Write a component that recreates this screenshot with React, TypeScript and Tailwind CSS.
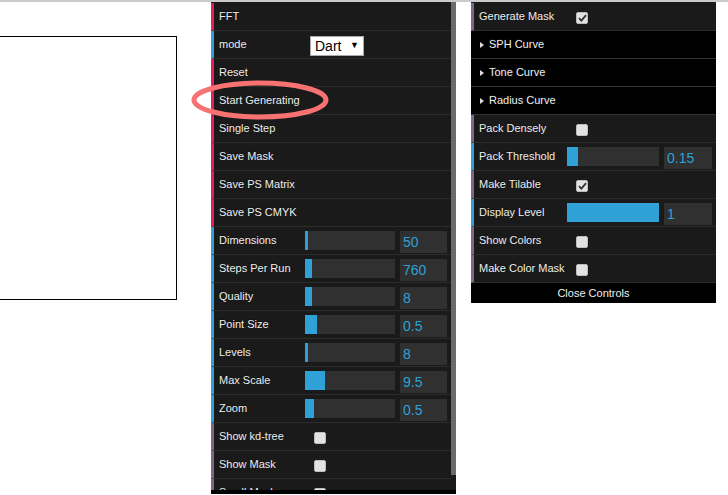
import React from "react";

type Row =
  | { kind: "button"; label: string }
  | { kind: "select"; label: string; value: string }
  | { kind: "slider"; label: string; fill: number; value: string }
  | { kind: "check"; label: string; checked: boolean }
  | { kind: "folder"; label: string };

const leftRows: Row[] = [
  { kind: "button", label: "FFT" },
  { kind: "select", label: "mode", value: "Dart" },
  { kind: "button", label: "Reset" },
  { kind: "button", label: "Start Generating" },
  { kind: "button", label: "Single Step" },
  { kind: "button", label: "Save Mask" },
  { kind: "button", label: "Save PS Matrix" },
  { kind: "button", label: "Save PS CMYK" },
  { kind: "slider", label: "Dimensions", fill: 3, value: "50" },
  { kind: "slider", label: "Steps Per Run", fill: 7, value: "760" },
  { kind: "slider", label: "Quality", fill: 7, value: "8" },
  { kind: "slider", label: "Point Size", fill: 12, value: "0.5" },
  { kind: "slider", label: "Levels", fill: 3, value: "8" },
  { kind: "slider", label: "Max Scale", fill: 20, value: "9.5" },
  { kind: "slider", label: "Zoom", fill: 9, value: "0.5" },
  { kind: "check", label: "Show kd-tree", checked: false },
  { kind: "check", label: "Show Mask", checked: false },
  { kind: "check", label: "Small Mask", checked: false },
];

const rightRows: Row[] = [
  { kind: "check", label: "Generate Mask", checked: true },
  { kind: "folder", label: "SPH Curve" },
  { kind: "folder", label: "Tone Curve" },
  { kind: "folder", label: "Radius Curve" },
  { kind: "check", label: "Pack Densely", checked: false },
  { kind: "slider", label: "Pack Threshold", fill: 11, value: "0.15" },
  { kind: "check", label: "Make Tilable", checked: true },
  { kind: "slider", label: "Display Level", fill: 92, value: "1" },
  { kind: "check", label: "Show Colors", checked: false },
  { kind: "check", label: "Make Color Mask", checked: false },
];

const strip = {
  button: "border-[#e61d5f]",
  select: "border-[#2fa1d6]",
  slider: "border-[#2fa1d6]",
  check: "border-[#806787]",
};

function Checkbox({ checked }: { checked: boolean }) {
  return (
    <div className="mt-[9px] ml-[9px] w-[12px] h-[12px] rounded-[2px] bg-[#e2e2e2] border border-[#bdbdbd] flex items-center justify-center">
      {checked && (
        <svg width="9" height="8" viewBox="0 0 9 8">
          <path d="M1 4.2 L3.4 6.6 L8 1.2" fill="none" stroke="#333" strokeWidth="1.8" />
        </svg>
      )}
    </div>
  );
}

function GuiRow({ row, labelW, sliderW, inputW }: { row: Row; labelW: string; sliderW: string; inputW: string }) {
  if (row.kind === "folder") {
    return (
      <div className="h-[28px] bg-black border-b border-[#333] flex items-center pl-[9px] text-[11px] text-[#eee] [text-shadow:0_-1px_0_#111]">
        <svg width="5" height="6" viewBox="0 0 5 6" className="mr-[4px]">
          <path d="M0 0 L4 3 L0 6 Z" fill="#ddd" />
        </svg>
        {row.label}
      </div>
    );
  }
  return (
    <div className={`h-[28px] border-l-[3px] ${strip[row.kind]} border-b border-b-[#2c2c2c] bg-[#1a1a1a] pl-[5px] pr-[4px] flex items-start`}>
      <div className={`${labelW} shrink-0 h-[27px] flex items-center text-[11px] text-[#eee] whitespace-nowrap [text-shadow:0_-1px_0_#111]`}>
        {row.kind === "button" ? row.label : row.label}
      </div>
      {row.kind === "select" && (
        <div className="mt-[5px] ml-[5px] w-[54px] h-[20px] bg-white border border-[#a9a9a9] flex items-center justify-between px-[4px] text-[14px] text-black">
          <span>{row.value}</span>
          <span className="text-[9px]">▼</span>
        </div>
      )}
      {row.kind === "slider" && (
        <div className="flex items-start gap-[5px] mt-[4px]">
          <div className={`${sliderW} h-[19px] bg-[#303030]`}>
            <div className="h-full bg-[#2fa1d6]" style={{ width: row.fill }} />
          </div>
          <div className={`${inputW} h-[22px] bg-[#303030] text-[#2fa1d6] text-[14px] pl-[3px] flex items-center`}>
            {row.value}
          </div>
        </div>
      )}
      {row.kind === "check" && <Checkbox checked={row.checked} />}
    </div>
  );
}

export default function App() {
  return (
    <div className="relative w-[728px] h-[495px] bg-white overflow-hidden font-['Liberation_Sans',Arial,sans-serif]">
      <div className="h-[2px] bg-[#cacaca]" />
      <div className="flex items-start">
        <div className="w-[211px] shrink-0">
          <div className="mt-[34px] w-[177px] h-[264px] border-t border-r border-b border-black bg-white" />
        </div>

        <div className="w-[245px] shrink-0 flex flex-col">
          <div className="h-[488px] bg-[#1a1a1a] pt-[1px] flex overflow-hidden">
            <div className="w-[240px] shrink-0">
              {leftRows.map((r) => (
                <GuiRow key={r.label} row={r} labelW="w-[86px]" sliderW="w-[90px]" inputW="w-[47px]" />
              ))}
            </div>
            <div className="w-[5px] h-[473px] -mt-[1px] bg-[#6b6b6b]" />
          </div>
          <div className="h-[4px] bg-black" />
        </div>

        <div className="w-[15px] shrink-0" />

        <div className="w-[245px] shrink-0 bg-[#1a1a1a] pt-[1px]">
          {rightRows.map((r) => (
            <GuiRow key={r.label} row={r} labelW="w-[88px]" sliderW="w-[92px]" inputW="w-[48px]" />
          ))}
          <div className="h-[20px] bg-black flex items-center justify-center text-[11px] text-[#eee]">
            Close Controls
          </div>
        </div>
      </div>

      <svg className="absolute left-[190px] top-[79px]" width="142" height="42" viewBox="0 0 142 42">
        <ellipse cx="70" cy="21" rx="66" ry="17" fill="none" stroke="#f87272" strokeWidth="5" />
      </svg>
    </div>
  );
}
